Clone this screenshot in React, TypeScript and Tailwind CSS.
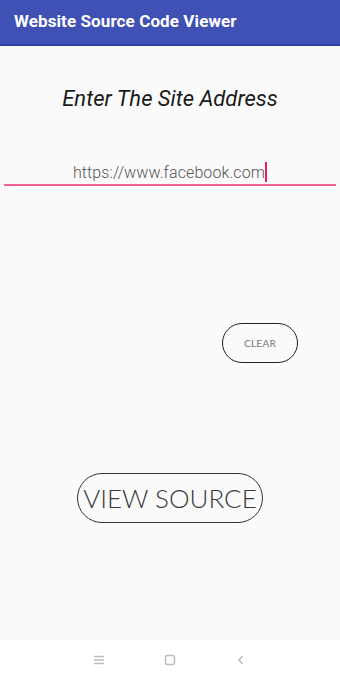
export default function App() {
  return (
    <div className="w-[340px] h-[680px] flex flex-col bg-[#fafafa] font-['Roboto',sans-serif] overflow-hidden">
      {/* App bar */}
      <div className="h-[46px] shrink-0 bg-[#3f51b5] border-b-2 border-[#2d3fa8] flex items-center px-[14px]">
        <span className="text-white font-bold text-[17px] tracking-[0.1px]">Website Source Code Viewer</span>
      </div>

      {/* Content */}
      <div className="flex-1 flex flex-col">
        <h1 className="mt-[40px] text-center italic text-[22px] text-[#1a1a1a] leading-[26px]">
          Enter The Site Address
        </h1>

        <div className="mt-[47px] mx-[4px] border-b-2 border-[#f06292] h-[27px] flex items-end justify-center pb-[1px]">
          <span className="text-[16px] font-light text-[#555] leading-[20px] tracking-[0.1px]">https://www.facebook.com</span>
          <span className="w-[2px] h-[20px] bg-[#e91e63] mb-[1px]" />
        </div>

        <div className="mt-[137px] flex justify-end pr-[42px]">
          <button className="w-[76px] h-[40px] rounded-full border-[1.5px] border-[#222] text-[10px] text-[#777] font-['Lato',sans-serif] tracking-[0.3px]">
            CLEAR
          </button>
        </div>

        <div className="mt-[110px] flex justify-center">
          <button className="w-[186px] h-[50px] rounded-full border-[1.5px] border-[#333] text-[26px] text-[#3a3a3a] font-['Lato',sans-serif] font-light">
            VIEW SOURCE
          </button>
        </div>
      </div>

      {/* Nav bar */}
      <div className="h-[40px] shrink-0 bg-white flex items-center justify-center gap-[59px] text-[#bbb]">
        <svg width="12" height="12" viewBox="0 0 12 12">
          <path d="M1 2.5h10M1 6h10M1 9.5h10" stroke="#bdbdbd" strokeWidth="1.4" />
        </svg>
        <svg width="12" height="12" viewBox="0 0 12 12">
          <rect x="1.5" y="1.5" width="9" height="9" rx="2" fill="none" stroke="#bdbdbd" strokeWidth="1.5" />
        </svg>
        <svg width="12" height="12" viewBox="0 0 12 12">
          <path d="M7.5 2L4 6l3.5 4" fill="none" stroke="#bdbdbd" strokeWidth="1.5" />
        </svg>
      </div>
    </div>
  )
}
